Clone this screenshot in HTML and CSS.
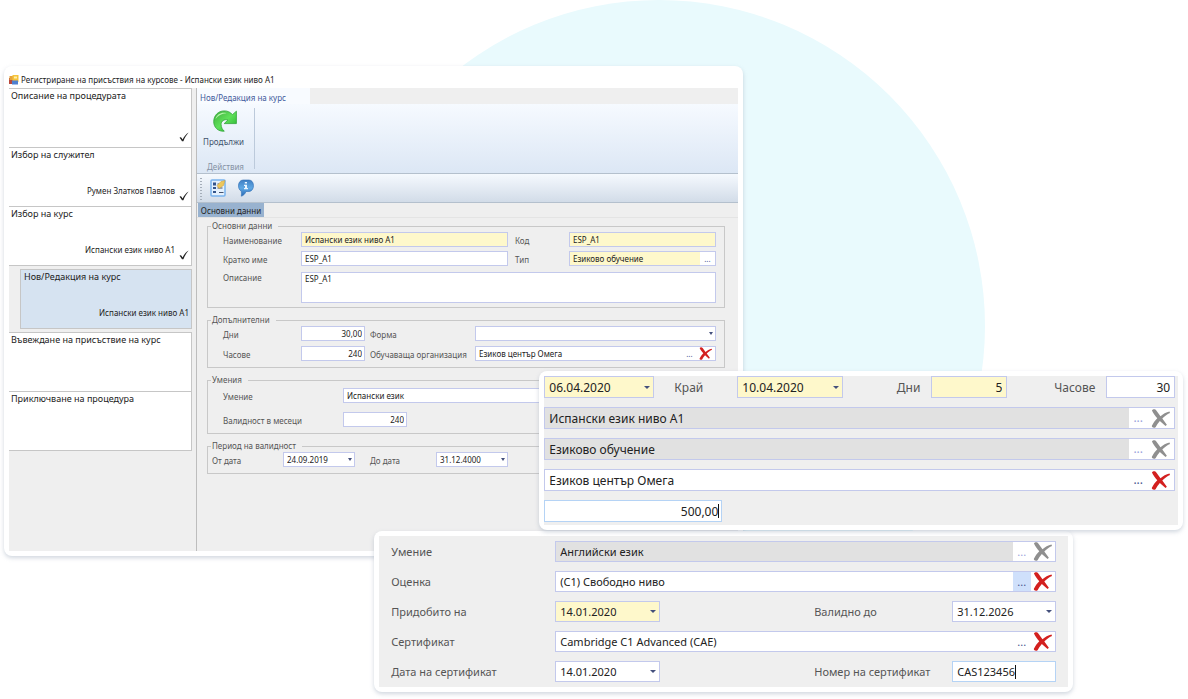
FILE: index.html
```
<!DOCTYPE html>
<html lang="bg">
<head>
    <meta charset="UTF-8">
    <meta name="viewport" content="width=device-width, initial-scale=1.0">
    <title>Регистриране на присъствия на курсове</title>
    <link rel="stylesheet" href="styles.css">
</head>
<body>
<!-- shared icons -->
<svg class="icon-defs" width="0" height="0" aria-hidden="true">
    <defs>
        <linearGradient id="green" x1="0" y1="0" x2="1" y2="1">
            <stop offset="0" stop-color="#3fae3c"/>
            <stop offset="0.5" stop-color="#5fe05a"/>
            <stop offset="1" stop-color="#1fae2a"/>
        </linearGradient>
        <linearGradient id="blue" x1="0" y1="0" x2="0" y2="1">
            <stop offset="0" stop-color="#3f7fc4"/>
            <stop offset="0.5" stop-color="#5fa8e4"/>
            <stop offset="1" stop-color="#2668b4"/>
        </linearGradient>
    </defs>
    <symbol id="icon-cross" viewBox="0 0 20 20">
        <path d="M1 1.5C2-.2 4.600-.3 5.600 1.700L10 7.600C12.500 5.300 16 3.200 19.500 2.600L20 4.200C17 5.500 14 7.700 11.900 10.100L16.700 16.600L15.300 18L9.300 12.600C7.500 14.700 6 17 4.800 19.200C3.200 20.300 1.100 19.700.800 18C2.200 14.800 4.400 12 6.600 9.700C4.500 7 2.200 4.400 1 1.500Z"/>
    </symbol>
    <symbol id="icon-check" viewBox="0 0 10 10">
        <path d="M.6 5.700C1.300 5 2 5.100 2.500 5.800L3.600 7.400C5.200 4.400 7 2.200 9.600.6C7.500 3 5.600 5.900 4.400 9.300H3C2.300 7.900 1.600 6.700.6 5.700Z" fill="#222"/>
    </symbol>
</svg>

<main class="stage">
    <div class="circle"></div>

    <section class="window window-main">
        <header class="title-bar">
            <svg class="app-icon" viewBox="0 0 10 10" aria-hidden="true">
                <rect x="0" y="3" width="6" height="6" fill="#b9483c"/>
                <rect x="0.500" y="1" width="4" height="4" fill="#e6a33a"/>
                <rect x="3.500" y="0" width="6" height="7" fill="#f5c33b"/>
                <rect x="5" y="1.500" width="3" height="2" fill="#fff0a8"/>
                <rect x="3" y="5.500" width="6" height="4" fill="#4d7fd0"/>
            </svg>
            <h1>Регистриране на присъствия на курсове - Испански език ниво А1</h1>
        </header>
        <div class="window-body">
            <ol class="steps">
                <li class="step">
                    <span>Описание на процедурата</span>
                    <div class="step-foot"><svg class="check"><use href="#icon-check"/></svg></div>
                </li>
                <li class="step">
                    <span>Избор на служител</span>
                    <div class="step-foot"><small>Румен Златков Павлов</small><svg class="check"><use href="#icon-check"/></svg></div>
                </li>
                <li class="step">
                    <span>Избор на курс</span>
                    <div class="step-foot"><small>Испански език ниво А1</small><svg class="check"><use href="#icon-check"/></svg></div>
                </li>
                <li class="step step-active">
                    <span>Нов/Редакция на курс</span>
                    <div class="step-foot"><small>Испански език ниво А1</small></div>
                </li>
                <li class="step step-next">
                    <span>Въвеждане на присъствие на курс</span>
                </li>
                <li class="step">
                    <span>Приключване на процедура</span>
                </li>
            </ol>

            <div class="content">
                <div class="tab-strip"><button type="button" class="tab">Нов/Редакция на курс</button></div>
                <div class="ribbon">
                    <div class="ribbon-group">
                        <button type="button" class="ribbon-button">
                            <svg class="icon-next" viewBox="0 0 24 22" aria-hidden="true">
                                <path d="M23.400 1.200V13.600H11.200L14.900 10C11.200 8.700 8 11.300 8.100 14.500C8.200 17.500 9.300 19.500 11.300 21.200C5 21.700.7 17.300.7 11.600C.8 5.200 5.400 1 11 .9C14.500.8 17.400 2 19.400 4.700Z" fill="url(#green)" stroke="#2ea436" stroke-width="0.800"/>
                                <path d="M2.500 9C4 4 9 1.800 13.500 3.200C8.500 3.400 5 5.800 2.500 9Z" fill="#b9f3ae"/>
                            </svg>
                            Продължи
                        </button>
                        <span class="ribbon-caption">Действия</span>
                    </div>
                </div>
                <div class="toolbar">
                    <button type="button" class="tool" aria-label="Данни">
                        <svg viewBox="0 0 16 18" aria-hidden="true">
                            <rect x="1" y="1" width="14" height="16" rx="1" fill="#e4f1fd" stroke="#7ab4ee" stroke-width="1.500"/>
                            <path d="M3 3.500h3v3H3zM3 8h3v2H3zM3 12h3v2H3z" fill="#33558c"/>
                            <path d="M7.500 9h5M9 13.500h4.500M7.500 5H9" stroke="#44506a" stroke-width="1.200"/>
                            <path d="M7 6.500L11 2.500L15 1.500L13.500 6.500L9 9.500Z" fill="#edc75c" stroke="#c79a3c" stroke-width="0.500"/>
                        </svg>
                    </button>
                    <button type="button" class="tool" aria-label="Информация">
                        <svg viewBox="0 0 16 18" aria-hidden="true">
                            <path d="M5 1H11C17 1.200 17 12 11 12.500H8C7 15 5.500 16.600 3.300 17.200C3.600 15.400 3.500 14 3.300 12.100C-.8 10.500-.6 1.400 5 1Z" fill="url(#blue)" stroke="#2f6fb5" stroke-width="0.600"/>
                            <path d="M6.800 3H9V4.600H6.800ZM6 5.700H9V9H10V10.200H6V9H7V7H6Z" fill="#eaf5ff"/>
                        </svg>
                    </button>
                </div>
                <div class="sub-tabs"><button type="button" class="sub-tab">Основни данни</button></div>

                <form class="groups">
                    <fieldset class="group group-basic">
                        <legend>Основни данни</legend>
                        <label for="name">Наименование</label>
                        <div class="field required"><input id="name" type="text" value="Испански език ниво А1"></div>
                        <label for="code">Код</label>
                        <div class="field required"><input id="code" type="text" value="ESP_A1"></div>
                        <label for="short">Кратко име</label>
                        <div class="field"><input id="short" type="text" value="ESP_A1"></div>
                        <label for="type">Тип</label>
                        <div class="field required"><input id="type" type="text" value="Езиково обучение"><button type="button" class="more" aria-label="Избор на тип">...</button></div>
                        <label for="description" class="label-top">Описание</label>
                        <div class="field field-area"><textarea id="description">ESP_A1</textarea></div>
                    </fieldset>

                    <fieldset class="group group-extra">
                        <legend>Допълнителни</legend>
                        <label for="days">Дни</label>
                        <div class="field number"><input id="days" type="text" value="30,00"></div>
                        <label for="form">Форма</label>
                        <div class="field has-arrow"><select id="form"><option></option></select></div>
                        <label for="hours">Часове</label>
                        <div class="field number"><input id="hours" type="text" value="240"></div>
                        <label for="org">Обучаваща организация</label>
                        <div class="field"><input id="org" type="text" value="Езиков център Омега"><button type="button" class="more" aria-label="Избор">...</button><button type="button" class="clear" aria-label="Изчистване"><svg><use href="#icon-cross"/></svg></button></div>
                    </fieldset>

                    <fieldset class="group group-skills">
                        <legend>Умения</legend>
                        <label for="skill">Умение</label>
                        <div class="field"><input id="skill" type="text" value="Испански език"></div>
                        <label for="months">Валидност в месеци</label>
                        <div class="field number months"><input id="months" type="text" value="240"></div>
                    </fieldset>

                    <fieldset class="group group-period">
                        <legend>Период на валидност</legend>
                        <label for="from">От дата</label>
                        <div class="field has-arrow"><select id="from"><option>24.09.2019</option></select></div>
                        <label for="to">До дата</label>
                        <div class="field has-arrow"><select id="to"><option>31.12.4000</option></select></div>
                    </fieldset>
                </form>
            </div>
        </div>
    </section>

    <section class="window window-skill">
        <form class="skill-form">
            <label for="s-skill">Умение</label>
            <div class="field locked wide"><input id="s-skill" type="text" value="Английски език" readonly><button type="button" class="more" aria-label="Избор">...</button><button type="button" class="clear" aria-label="Изчистване"><svg><use href="#icon-cross"/></svg></button></div>
            <label for="s-grade">Оценка</label>
            <div class="field wide"><input id="s-grade" type="text" value="(C1) Свободно ниво"><button type="button" class="more more-hot" aria-label="Избор">...</button><button type="button" class="clear" aria-label="Изчистване"><svg><use href="#icon-cross"/></svg></button></div>
            <label for="s-from">Придобито на</label>
            <div class="field required has-arrow"><select id="s-from"><option>14.01.2020</option></select></div>
            <label for="s-to" class="second">Валидно до</label>
            <div class="field has-arrow"><select id="s-to"><option>31.12.2026</option></select></div>
            <label for="s-cert">Сертификат</label>
            <div class="field wide"><input id="s-cert" type="text" value="Cambridge C1 Advanced (CAE)"><button type="button" class="more" aria-label="Избор">...</button><button type="button" class="clear" aria-label="Изчистване"><svg><use href="#icon-cross"/></svg></button></div>
            <label for="s-date">Дата на сертификат</label>
            <div class="field has-arrow"><select id="s-date"><option>14.01.2020</option></select></div>
            <label for="s-number" class="second">Номер на сертификат</label>
            <div class="field focused"><input id="s-number" class="fit" type="text" value="CAS123456"><span class="caret"></span></div>
        </form>
    </section>

    <section class="window window-course">
        <form class="course-form">
            <div class="course-row">
                <div class="field required has-arrow"><select aria-label="Начало"><option>06.04.2020</option></select></div>
                <label for="c-end">Край</label>
                <div class="field required has-arrow"><select id="c-end"><option>10.04.2020</option></select></div>
                <label for="c-days">Дни</label>
                <div class="field required number"><input id="c-days" type="text" value="5"></div>
                <label for="c-hours">Часове</label>
                <div class="field number"><input id="c-hours" type="text" value="30"></div>
            </div>
            <div class="field locked"><input type="text" value="Испански език ниво А1" aria-label="Курс" readonly><button type="button" class="more" aria-label="Избор">...</button><button type="button" class="clear" aria-label="Изчистване"><svg><use href="#icon-cross"/></svg></button></div>
            <div class="field locked"><input type="text" value="Езиково обучение" aria-label="Тип" readonly><button type="button" class="more" aria-label="Избор">...</button><button type="button" class="clear" aria-label="Изчистване"><svg><use href="#icon-cross"/></svg></button></div>
            <div class="field"><input type="text" value="Езиков център Омега" aria-label="Организация"><button type="button" class="more" aria-label="Избор">...</button><button type="button" class="clear" aria-label="Изчистване"><svg><use href="#icon-cross"/></svg></button></div>
            <div class="field number focused price"><input type="text" value="500,00" aria-label="Цена"><span class="caret"></span></div>
        </form>
    </section>
</main>
</body>
</html>
```

FILE: styles.css
```
* {
    box-sizing: border-box;
}
body {
    margin: 0;
    background: #fff;
    color: #333;
    font-family: "Noto Sans", "Open Sans", sans-serif;
    font-size: 8px;
}
button, input, select, textarea {
    font: inherit;
    color: inherit;
    border: 0;
    margin: 0;
    padding: 0;
    background: none;
    outline: none;
}
.icon-defs {
    position: absolute;
}
.stage {
    position: relative;
    min-height: 699px;
    overflow: hidden;
}
.circle {
    position: absolute;
    top: 0;
    left: 28%;
    width: 652px;
    height: 652px;
    border-radius: 50%;
    background: #e9fafd;
}

/* windows */
.window {
    position: absolute;
    padding: 5px;
    border-radius: 8px;
    background: #fff;
    box-shadow: 0 2px 4px rgba(140, 155, 175, 0.4);
}
.window-main {
    top: 66px;
    left: 4px;
    width: 62.2%;
}
.window-skill {
    top: 531px;
    left: 31.5%;
    width: 58.8%;
    font-size: 11px;
}
.window-course {
    top: 371px;
    left: 45.4%;
    width: 54.2%;
    font-size: 12px;
}
.title-bar {
    display: flex;
    align-items: center;
    gap: 2px;
    height: 17px;
}
.title-bar h1 {
    margin: 0;
    font-size: 8px;
    font-weight: 400;
    color: #222;
}
.app-icon {
    width: 10px;
    height: 10px;
}
.window-body {
    display: grid;
    grid-template-columns: 188px 1fr;
    background: #efefef;
}

/* steps */
.steps {
    list-style: none;
    margin: 0;
    padding: 0 4px 100px 0;
    border-right: 1px solid #bdbdbd;
}
.step {
    display: flex;
    flex-direction: column;
    justify-content: space-between;
    height: 59px;
    padding: 0 2px 5px;
    border-right: 1px solid #c6c6c6;
    border-bottom: 1px solid #c6c6c6;
    background: #fff;
    color: #222;
    font-size: 9px;
    line-height: 14px;
}
.step:first-child, .step-next {
    height: 60px;
    border-top: 1px solid #c6c6c6;
}
.step-foot {
    display: flex;
    justify-content: flex-end;
    gap: 4px;
}
.step-foot small {
    font-size: 8px;
    line-height: 20px;
}
.check {
    align-self: flex-end;
    width: 10px;
    height: 10px;
}
.step-active {
    height: 60px;
    margin: 3px 0 3px 11px;
    padding-left: 3px;
    border: 1px solid #c6c6c6;
    background: #d6e3f1;
}

/* ribbon and tabs */
.tab-strip {
    height: 16px;
}
.tab {
    height: 16px;
    width: 113px;
    padding: 2px 3px 0;
    background: #f8fbff;
    color: #3f5a9c;
    text-align: left;
}
.ribbon {
    height: 70px;
    padding: 4px 0;
    border-bottom: 1px solid #b4c0cd;
    background: linear-gradient(#f6faff, #dce7f5);
}
.ribbon-group {
    display: flex;
    flex-direction: column;
    justify-content: space-between;
    align-items: center;
    width: 58px;
    height: 61px;
    border-right: 1px solid #bccadb;
}
.ribbon-button {
    display: flex;
    flex-direction: column;
    align-items: center;
    gap: 4px;
    padding-top: 2px;
    padding-right: 4px;
    color: #40516b;
    line-height: 12px;
}
.icon-next {
    width: 24px;
    height: 22px;
    margin-left: 4px;
}
.ribbon-caption {
    color: #8592a4;
    line-height: 4px;
}
.toolbar {
    display: flex;
    align-items: center;
    gap: 12px;
    height: 29px;
    padding-left: 13px;
    border-bottom: 1px solid #b4c0cd;
    background:
        repeating-linear-gradient(#a5aeb9 0 1px, transparent 1px 3px) 3px 4px / 2px 22px no-repeat,
        linear-gradient(#f5f9fe, #d2dce8);
}
.tool, .tool svg {
    display: block;
    width: 16px;
    height: 18px;
}
.sub-tabs {
    height: 15px;
    padding-left: 1px;
    border-bottom: 1px solid #e4e4e4;
}
.sub-tab {
    display: block;
    width: 66px;
    height: 14px;
    background: #98b2cf;
    color: #222;
}

/* fields */
label, legend {
    color: #555;
    white-space: nowrap;
}
.field {
    display: flex;
    align-items: center;
    min-width: 0;
    height: 15px;
    border: 1px solid #c3c9ec;
    background: #fff;
    color: #222;
}
.field input, .field select, .field textarea {
    flex: 1;
    min-width: 0;
    width: 100%;
    height: 100%;
    padding: 0 3px;
}
.field select {
    appearance: none;
}
.field textarea {
    resize: none;
    line-height: 12px;
}
.required {
    background: #fef8cb;
}
.locked {
    background: #e1e1e1;
}
.focused {
    border-color: #b5d3f5;
}
.number input {
    text-align: right;
    padding-right: 2px;
}
.has-arrow::after {
    content: "";
    margin-right: 2px;
    border: 2px solid transparent;
    border-top: 3px solid #44507c;
    border-bottom: 0;
}
.more {
    align-self: stretch;
    width: 15px;
    background: #fff;
    color: #4a5590;
    line-height: 8px;
}
.more-hot {
    background: #cfe0fb;
}
.clear {
    align-self: stretch;
    display: flex;
    align-items: center;
    justify-content: center;
    background: #fff;
    width: 18px;
}
.clear svg {
    width: 13px;
    height: 13px;
    fill: #d3201f;
}
.locked .clear svg {
    fill: #8f8f8f;
}
.locked .more {
    color: #9aa2dc;
}
.caret {
    width: 1px;
    height: 14px;
    background: #111;
}

/* groups */
.groups {
    padding: 2px 13px 71px 10px;
}
.group {
    display: grid;
    align-items: center;
    margin: 0 0 6px;
    padding: 0 8px 4px 15px;
    border: 1px solid #c8c8c8;
}
.group legend {
    margin-left: -12px;
    padding: 0 6px 0 1px;
    line-height: 12px;
}
.group label {
    padding-top: 2px;
    line-height: 12px;
}
.group .label-top {
    align-self: start;
}
.group-basic {
    grid-template-columns: 78px 207fr 61px 147fr;
    row-gap: 4px;
}
.group-basic label:nth-of-type(even) {
    padding-left: 7px;
}
.group-extra label:nth-of-type(even) {
    padding-left: 5px;
}
.field-area {
    grid-column: 2 / -1;
    height: 31px;
    margin-top: 2px;
}
.group-extra {
    grid-template-columns: 78px 64px 110px 1fr;
    row-gap: 5px;
    padding-bottom: 6px;
}
.group-skills {
    grid-template-columns: 120px 1fr;
    row-gap: 9px;
    padding-top: 2px;
    padding-bottom: 6px;
}
.months {
    width: 64px;
}
.group-period {
    grid-template-columns: 71px 72px 81px 72px;
    padding-left: 4px;
    padding-bottom: 6px;
}
.group-period legend {
    margin-left: -1px;
}
.group-period label:nth-of-type(2) {
    padding-left: 15px;
}

/* certificate window */
.skill-form {
    display: grid;
    grid-template-columns: 164px 105px 292px 1fr;
    align-items: center;
    row-gap: 9px;
    padding: 5px 12px;
    background: #efefef;
}
.skill-form .field {
    height: 21px;
}
.skill-form .wide {
    grid-column: 2 / -1;
}
.skill-form .second {
    padding-left: 154px;
}
.skill-form .field .fit {
    flex: none;
    width: auto;
    field-sizing: content;
    padding-right: 0;
}

/* course window */
.course-form {
    display: grid;
    row-gap: 9px;
    padding: 0 3px 3px 0;
    background: #efefef;
}
.course-row {
    display: grid;
    grid-template-columns: 110px 83px 106px 88px 76px 99px 1fr;
    align-items: center;
}
.course-row label {
    padding-left: 20px;
}
.course-row label:nth-of-type(n + 2) {
    padding: 0 11px 0 0;
    text-align: right;
}
.course-form .field {
    height: 22px;
}
.course-form .price {
    width: 178px;
}
.skill-form input, .skill-form select, .course-form input, .course-form select {
    padding-left: 4px;
}
.course-form .number input {
    padding-right: 4px;
}
.course-form .price input {
    padding-right: 0;
}
.course-form .caret {
    margin-right: 2px;
}
.skill-form .has-arrow::after, .course-form .has-arrow::after {
    margin-right: 3px;
    border-width: 3px;
    border-bottom: 0;
}
.skill-form .clear {
    width: 24px;
}
.course-form .clear {
    width: 27px;
}
.skill-form .more, .course-form .more {
    width: 18px;
}
.skill-form .clear svg, .course-form .clear svg {
    width: 19px;
    height: 19px;
}
```
